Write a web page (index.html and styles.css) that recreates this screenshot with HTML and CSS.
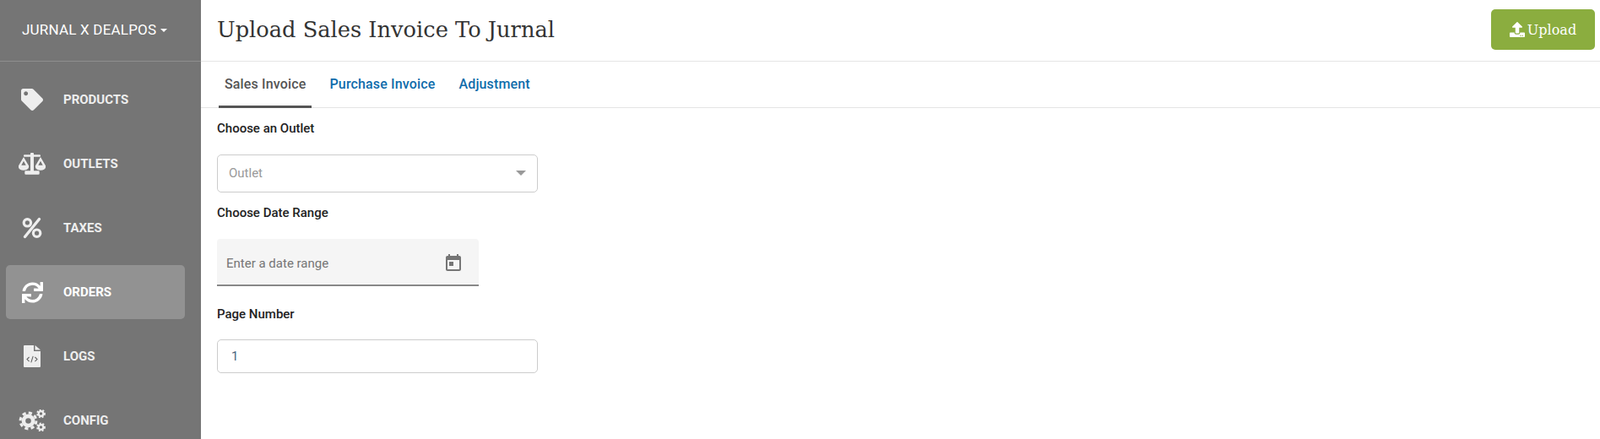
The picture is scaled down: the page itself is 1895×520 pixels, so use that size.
FILE: index.html
```html
<!DOCTYPE html>
<html lang="en">
<head>
    <meta charset="UTF-8">
    <meta name="viewport" content="width=device-width, initial-scale=1.0">
    <title>Upload Sales Invoice To Jurnal</title>
    <link rel="stylesheet" href="styles.css">
</head>
<body>

    <div class="app">
        <aside class="sidebar">
            <div class="brand">JURNAL X DEALPOS<span class="brand-caret"></span></div>
            <nav class="nav">
                <a class="nav-item">
                    <span class="nav-icon">
                        <svg width="26" height="26" viewBox="0 0 512 512"><path d="M0 252.118V48C0 21.49 21.49 0 48 0h204.118a48 48 0 0 1 33.941 14.059l211.882 211.882c18.745 18.745 18.745 49.137 0 67.882L293.823 497.941c-18.745 18.745-49.137 18.745-67.882 0L14.059 286.059A48 48 0 0 1 0 252.118zM112 64c-26.51 0-48 21.49-48 48s21.49 48 48 48 48-21.49 48-48-21.49-48-48-48z"/></svg>
                    </span>
                    PRODUCTS
                </a>
                <a class="nav-item">
                    <span class="nav-icon">
                        <svg width="32" height="26" viewBox="0 0 640 512">
                            <path d="M280 40 V18 a40 28 0 0 1 80 0 V40 H500 a20 20 0 0 1 20 20 V70 a20 20 0 0 1 -20 20 H360 V420 H470 a24 24 0 0 1 24 24 V488 a24 24 0 0 1 -24 24 H170 a24 24 0 0 1 -24 -24 V444 a24 24 0 0 1 24 -24 H280 V90 H140 a20 20 0 0 1 -20 -20 V60 a20 20 0 0 1 20 -20 Z"/>
                            <path fill-rule="evenodd" d="M120 96 L240 300 C254 345 226 410 120 410 C14 410 -14 345 0 300 Z M120 190 L66 292 H174 Z"/>
                            <path fill-rule="evenodd" d="M520 96 L640 300 C654 345 626 410 520 410 C414 410 386 345 400 300 Z M520 190 L466 292 H574 Z"/>
                        </svg>
                    </span>
                    OUTLETS
                </a>
                <a class="nav-item">
                    <span class="nav-icon">
                        <svg width="24" height="26" viewBox="0 0 24 26">
                            <circle cx="6.4" cy="6.8" r="4.2" fill="none" stroke="#eee" stroke-width="3.2"/>
                            <circle cx="17.6" cy="19.2" r="4.2" fill="none" stroke="#eee" stroke-width="3.2"/>
                            <path d="M20.5 2.5 3.5 23.5" fill="none" stroke="#eee" stroke-width="3.4" stroke-linecap="round"/>
                        </svg>
                    </span>
                    TAXES
                </a>
                <a class="nav-item active">
                    <span class="nav-icon">
                        <svg width="25" height="25" viewBox="0 0 512 512"><path d="M440.65 12.57l4 82.77A247.16 247.16 0 0 0 255.83 8C134.73 8 33.91 94.92 12.29 209.82A12 12 0 0 0 24.09 224h49.05a12 12 0 0 0 11.67-9.26 175.91 175.91 0 0 1 317-56.94l-101.46-4.86a12 12 0 0 0-12.57 12v47.41a12 12 0 0 0 12 12H500a12 12 0 0 0 12-12V12a12 12 0 0 0-12-12h-47.37a12 12 0 0 0-11.98 12.57zM255.83 432a175.61 175.61 0 0 1-146-77.8l101.8 4.87a12 12 0 0 0 12.57-12v-47.4a12 12 0 0 0-12-12H12a12 12 0 0 0-12 12V500a12 12 0 0 0 12 12h47.35a12 12 0 0 0 12-12.6l-4.15-82.57A247.17 247.17 0 0 0 255.83 504c121.11 0 221.93-86.92 243.55-201.82a12 12 0 0 0-11.8-14.18h-49.05a12 12 0 0 0-11.67 9.26A175.86 175.86 0 0 1 255.83 432z"/></svg>
                    </span>
                    ORDERS
                </a>
                <a class="nav-item">
                    <span class="nav-icon">
                        <svg width="20" height="26" viewBox="0 0 20 26">
                            <path d="M0 1a1 1 0 0 1 1-1h11v7h8v18a1 1 0 0 1-1 1H1a1 1 0 0 1-1-1z"/>
                            <path d="M13.5 0 20 5.6h-6.5z"/>
                            <path d="M6.6 14 4 16.6l2.6 2.6M13.4 14l2.6 2.6-2.6 2.6M11.2 12.8 8.8 20.4" fill="none" stroke="#666" stroke-width="1.1"/>
                        </svg>
                    </span>
                    LOGS
                </a>
                <a class="nav-item">
                    <span class="nav-icon">
                        <svg width="32" height="26" viewBox="0 0 32 26">
                            <g fill="none" stroke="#eee">
                                <circle cx="11.5" cy="13.5" r="5.6" stroke-width="4.6"/>
                                <circle cx="11.5" cy="13.5" r="9.4" stroke-width="3" stroke-dasharray="4.2 3.18"/>
                                <circle cx="26.5" cy="5" r="2.8" stroke-width="2.2"/>
                                <circle cx="26.5" cy="5" r="4.5" stroke-width="1.8" stroke-dasharray="2 1.77"/>
                                <circle cx="26.5" cy="21" r="2.8" stroke-width="2.2"/>
                                <circle cx="26.5" cy="21" r="4.5" stroke-width="1.8" stroke-dasharray="2 1.77"/>
                            </g>
                        </svg>
                    </span>
                    CONFIG
                </a>
            </nav>
        </aside>

        <main class="main">
            <header class="topbar">
                <h1 class="page-title">Upload Sales Invoice To Jurnal</h1>
                <button class="upload-btn">
                    <svg width="18" height="18" viewBox="0 0 512 512"><path d="M296 384h-80c-13.3 0-24-10.7-24-24V192h-87.7c-17.8 0-26.7-21.5-14.1-34.1L242.3 5.7c7.5-7.5 19.8-7.5 27.3 0l152.2 152.2c12.6 12.6 3.7 34.1-14.1 34.1H320v168c0 13.3-10.7 24-24 24zm216-8v112c0 13.3-10.7 24-24 24H24c-13.3 0-24-10.7-24-24V376c0-13.3 10.7-24 24-24h136v8c0 30.9 25.1 56 56 56h80c30.9 0 56-25.1 56-56v-8h136c13.3 0 24 10.7 24 24zm-124 88c0-11-9-20-20-20s-20 9-20 20 9 20 20 20 20-9 20-20zm64 0c0-11-9-20-20-20s-20 9-20 20 9 20 20 20 20-9 20-20z"/></svg>
                    Upload
                </button>
            </header>

            <div class="tabs">
                <a class="tab active">Sales Invoice</a>
                <a class="tab">Purchase Invoice</a>
                <a class="tab">Adjustment</a>
            </div>

            <form class="form">
                <label class="field-label field-label-outlet">Choose an Outlet</label>
                <div class="select-box">
                    <span>Outlet</span>
                    <span class="select-arrow"></span>
                </div>

                <label class="field-label field-label-date">Choose Date Range</label>
                <div class="date-field">
                    <input class="date-input" type="text" placeholder="Enter a date range">
                    <svg width="24" height="24" viewBox="0 0 24 24"><path d="M19 3h-1V1h-2v2H8V1H6v2H5c-1.11 0-1.99.9-1.99 2L3 19c0 1.1.89 2 2 2h14c1.1 0 2-.9 2-2V5c0-1.1-.9-2-2-2zm0 16H5V8h14v11zM7 10h5v5H7z"/></svg>
                </div>

                <label class="field-label field-label-page">Page Number</label>
                <input class="text-input" type="text" value="1">
            </form>
        </main>
    </div>

</body>
</html>
```

FILE: styles.css
```css
* {
    box-sizing: border-box;
}
html, body {
    height: 520px;
    margin: 0;
    overflow: hidden;
}
body {
    font-family: Roboto, "Liberation Sans", sans-serif;
    background-color: #fff;
    color: #222;
}
.app {
    display: flex;
    height: 520px;
}

/* sidebar */
.sidebar {
    width: 238px;
    flex-shrink: 0;
    background-color: #757575;
    overflow: hidden;
}
.brand {
    display: flex;
    align-items: center;
    height: 73px;
    padding: 0 0 3px 26px;
    border-bottom: 1px solid #8e8e8e;
    color: #fff;
    font-size: 17px;
    letter-spacing: 0.2px;
}
.brand-caret {
    margin: 3px 0 0 5px;
    border-top: 4px solid #fff;
    border-left: 4px solid transparent;
    border-right: 4px solid transparent;
}
.nav {
    display: flex;
    flex-direction: column;
    gap: 12px;
    padding: 13px 19px 0 7px;
}
.nav-item {
    display: flex;
    align-items: center;
    flex-shrink: 0;
    gap: 21px;
    height: 64px;
    padding: 0 0 1px 15px;
    border-radius: 5px;
    color: #eee;
    font-size: 15px;
    font-weight: 700;
}
.nav-item.active {
    background-color: #929292;
    color: #fff;
}
.nav-icon {
    display: flex;
    justify-content: center;
    width: 32px;
    margin-top: 1px;
}
.nav-icon svg {
    fill: #eee;
}
.nav-item.active svg {
    fill: #fff;
}

/* header */
.main {
    flex: 1;
    min-width: 0;
}
.topbar {
    display: flex;
    align-items: center;
    justify-content: space-between;
    height: 73px;
    padding: 0 6px 2px 19px;
    border-bottom: 1px solid #e4e4e4;
}
.page-title {
    margin: 0;
    font-family: "DejaVu Serif", serif;
    font-size: 25.7px;
    font-weight: 400;
    color: #333;
}
.upload-btn {
    display: flex;
    align-items: center;
    justify-content: center;
    gap: 3px;
    width: 123px;
    height: 48px;
    border: 0;
    border-radius: 5px;
    background-color: #8bad3f;
    color: #fff;
    font-family: "DejaVu Serif", serif;
    font-size: 16px;
}
.upload-btn svg {
    fill: #fff;
}

/* tabs */
.tabs {
    display: flex;
    gap: 14px;
    height: 55px;
    padding-left: 21px;
    border-bottom: 1px solid #e4e4e4;
}
.tab {
    height: 55px;
    padding: 17px 7px 0;
    color: #0f6cab;
    font-size: 16px;
    font-weight: 500;
    letter-spacing: 0.15px;
}
.tab.active {
    color: #555;
    border-bottom: 3px solid #555;
}

/* form */
.form {
    padding: 0 19px;
}
.field-label {
    display: block;
    font-size: 15px;
    font-weight: 500;
    color: #222;
}
.field-label-outlet {
    margin-top: 15px;
}
.field-label-date {
    margin-top: 15px;
}
.field-label-page {
    margin-top: 24px;
}
.select-box {
    display: flex;
    align-items: center;
    justify-content: space-between;
    width: 380px;
    height: 45px;
    margin-top: 22px;
    padding: 0 13px 2px 13px;
    border: 1px solid #ccc;
    border-radius: 5px;
    color: #999;
    font-size: 15px;
}
.select-arrow {
    margin-top: 1px;
    border-top: 6px solid #999;
    border-left: 6px solid transparent;
    border-right: 6px solid transparent;
}
.date-field {
    display: flex;
    align-items: center;
    justify-content: space-between;
    width: 310px;
    height: 56px;
    margin-top: 22px;
    padding: 3px 18px 0 11px;
    background-color: #f5f5f5;
    border-bottom: 2px solid #888;
    border-radius: 4px 4px 0 0;
}
.date-field svg {
    fill: #757575;
}
.date-input {
    flex: 1;
    border: 0;
    outline: 0;
    padding: 0;
    background: transparent;
    font-family: inherit;
    font-size: 15px;
}
.date-input::placeholder {
    color: #757575;
    opacity: 1;
}
.text-input {
    display: block;
    width: 380px;
    height: 40px;
    margin-top: 21px;
    padding: 0 16px;
    border: 1px solid #ccc;
    border-radius: 5px;
    outline: 0;
    color: #49657e;
    font-family: inherit;
    font-size: 15px;
}
```
